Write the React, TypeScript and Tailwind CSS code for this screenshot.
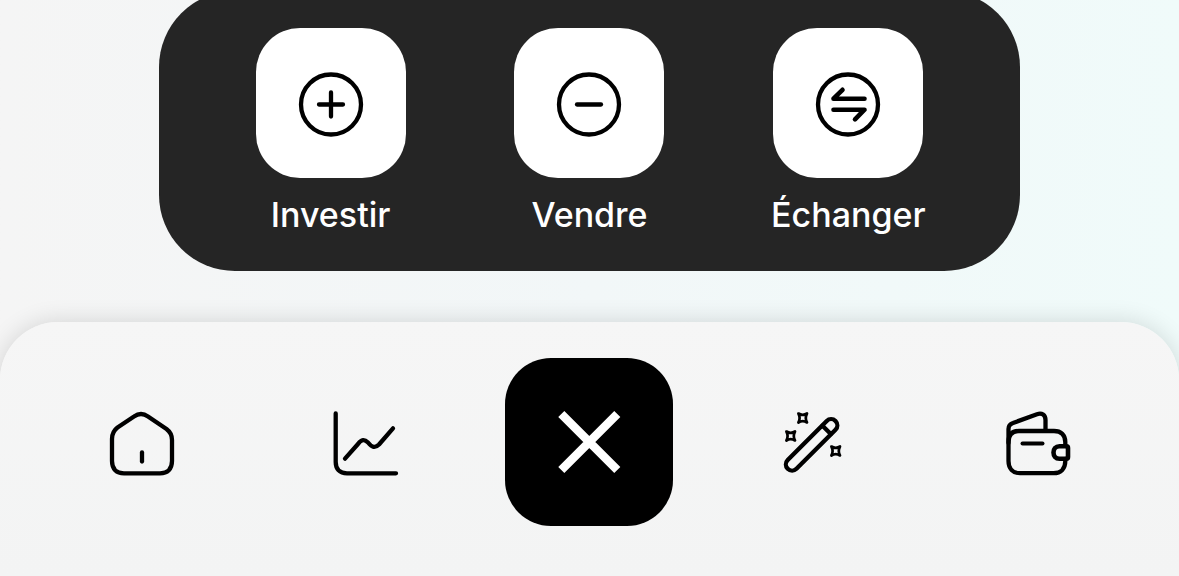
import React from 'react';

interface IconProps {
    children: React.ReactNode;
    viewBox?: string;
    className?: string;
}

const Icon: React.FC<IconProps> = ({ children, viewBox = '0 0 84 84', className = 'size-[84px]' }) => (
    <svg
        viewBox={viewBox}
        className={className}
        fill="none"
        stroke="currentColor"
        strokeWidth={4.3}
        strokeLinecap="round"
        strokeLinejoin="round"
        aria-hidden="true"
    >
        {children}
    </svg>
);

const actions = [
    {
        label: 'Investir',
        icon: <path d="M40 28.500V52.500M28 40.500H52" />,
    },
    {
        label: 'Vendre',
        icon: <path d="M28 40.500H52" />,
    },
    {
        label: 'Échanger',
        icon: <path d="M56.500 34.700H25.500L34.500 25.800M25.500 45.700H56.500L47 55.300" strokeWidth={4.6} />,
    },
];

const HomeIcon = () => (
    <Icon>
        <path d="M12 39C12 34 13.500 30.500 17.500 27.500L34 16.500C39 13 43 13 48 16.500L66.500 29C70.500 32 72 35 72 40V61C72 69 67.500 73.300 60 73.300H24C16.500 73.300 12 69 12 61Z" />
        <path d="M42 52.500V61.500" />
    </Icon>
);

const ChartIcon = () => (
    <Icon>
        <path d="M11.700 13.500V62C11.700 69 15.500 73.300 23 73.300H72" />
        <path d="M21 58.700L34 44C37.500 39 40.500 39 44 42.500C48 47.500 51 48.500 55 44.500L69 28.300" />
    </Icon>
);

const star = 'M-4.300 -4.500Q0 -1.800 4.300 -4.500Q1.900 0 4.300 4.500Q0 1.800 -4.300 4.500Q-1.900 0 -4.300 -4.500Z';

const WandIcon = () => (
    <Icon viewBox="-3 -2 84 84">
        <rect x={-33.8} y={-6.2} width={67.6} height={12.4} rx={6.2} transform="translate(37.6 42.900) rotate(-45)" />
        <path d="M48.500 23.800L56.800 32" />
        <g strokeWidth={2.7}>
            <path d={star} transform="translate(28.700 16)" />
            <path d={star} transform="translate(16.700 34)" />
            <path d={star} transform="translate(61.700 49)" />
        </g>
    </Icon>
);

const WalletIcon = () => (
    <Icon viewBox="-3 0 84 84">
        <path d="M67.300 46V42C67.300 35 63 31 56 31H21C14 31 10.500 35 10.500 42V61C10.500 68.500 15 73.200 22 73.200H55.500C63 73.200 67.300 68.500 67.300 61V59" />
        <path d="M10.500 43V29C10.500 26 12 24 15 23L39 14.200C44 12.500 47.500 15 47.500 20V30" />
        <path d="M24.500 43.500H44.500" strokeWidth={4} />
        <path d="M61.500 46.300H68.500Q70 46.300 70 48V57Q70 58.700 68.500 58.700H61.500C57.500 58.700 55.500 56 55.500 52.500C55.500 49 57.500 46.300 61.500 46.300Z" strokeWidth={4.6} />
    </Icon>
);

const NavLink: React.FC<{ label: string; children: React.ReactNode }> = ({ label, children }) => (
    <a href="#" aria-label={label} className="flex justify-center">
        {children}
    </a>
);

const App: React.FC = () => {
    return (
        <div className="flex min-h-screen flex-col overflow-hidden bg-linear-to-r from-[#f5f5f5] via-[#f2f7f8] to-[#f0fbfa] font-['Inter',sans-serif]">
            {/* Quick actions sheet, its top edge runs off the screen */}
            <section className="mx-auto -mt-[9px] grid w-[73%] grid-cols-3 rounded-[76px] bg-[#252525] px-[42px] pt-[37px] pb-9">
                {actions.map((action) => (
                    <button key={action.label} type="button" className="flex flex-col items-center gap-4 text-white">
                        <span className="flex size-[150px] items-center justify-center rounded-[44px] bg-white text-black">
                            <Icon viewBox="0 -1 80 80" className="size-20">
                                <circle cx={40} cy={40.5} r={30} />
                                {action.icon}
                            </Icon>
                        </span>
                        <span className="text-[34px] leading-[41px] font-medium">{action.label}</span>
                    </button>
                ))}
            </section>

            <nav className="mt-[51px] grid flex-1 grid-cols-5 items-center rounded-t-[58px] bg-linear-to-b from-[#f6f6f6] to-[#f3f4f4] px-[30px] pt-9 pb-[50px] shadow-[0_0_24px_rgba(0,0,0,0.14)]">
                <NavLink label="Accueil">
                    <HomeIcon />
                </NavLink>
                <NavLink label="Marchés">
                    <ChartIcon />
                </NavLink>
                <button
                    type="button"
                    aria-label="Fermer"
                    className="flex size-[168px] items-center justify-center justify-self-center rounded-[46px] bg-black text-white"
                >
                    <svg viewBox="0 0 80 80" className="size-20" stroke="currentColor" strokeWidth={8.6} aria-hidden="true">
                        <path d="M12.300 12L68.300 68M68.300 12L12.300 68" />
                    </svg>
                </button>
                <NavLink label="Outils">
                    <WandIcon />
                </NavLink>
                <NavLink label="Portefeuille">
                    <WalletIcon />
                </NavLink>
            </nav>
        </div>
    );
};

export default App;
